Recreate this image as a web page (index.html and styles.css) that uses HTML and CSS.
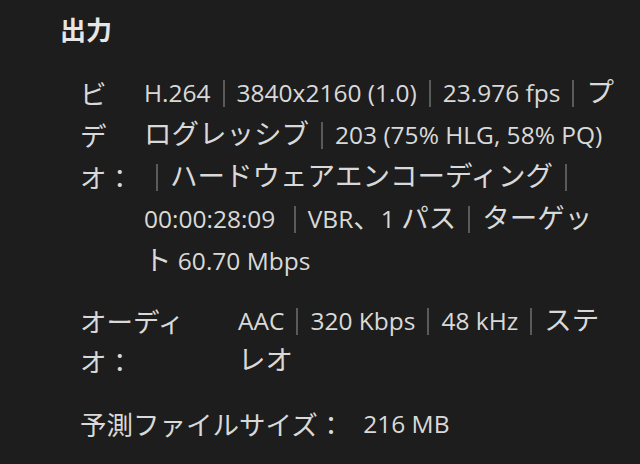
FILE: index.html
```html
<!DOCTYPE html>
<html lang="ja">
<head>
<meta charset="utf-8">
<link rel="stylesheet" href="styles.css">
</head>
<body>
<section class="panel">
  <h2 class="title">出力</h2>
  <div class="row video">
    <div class="label">ビデオ：</div>
    <div class="value">H.264<span class="sep"></span>3840x2160 (1.0)<span class="sep"></span>23.976 fps<span class="sep"></span><span class="ja">プログレッシブ</span><span class="sep"></span>203 (75% HLG, 58% PQ)<span class="sep"></span><span class="ja">ハードウェアエンコーディング</span><span class="sep"></span>00:00:28:09 <span class="sep"></span>VBR<span class="ja">、</span>1 <span class="ja">パス</span><span class="sep"></span><span class="ja">ターゲット</span> 60.70 Mbps</div>
  </div>
  <div class="row audio">
    <div class="label">オーディオ：</div>
    <div class="value">AAC<span class="sep"></span>320 Kbps<span class="sep"></span>48 kHz<span class="sep"></span><span class="ja">ステレオ</span></div>
  </div>
  <div class="row size">
    <div class="label">予測ファイルサイズ：</div>
    <div class="value">216 MB</div>
  </div>
</section>
</body>
</html>
```

FILE: styles.css
```css
html, body {
  margin: 0;
  padding: 0;
  background: #1d1d1d;
}
.panel {
  width: 640px;
  height: 464px;
  box-sizing: border-box;
  padding: 14px 25px 0 60px;
  color: #d9d9d9;
  font-family: "Open Sans", "Noto Sans CJK JP", sans-serif;
  font-size: 24.5px;
}
.title {
  margin: 0;
  font-family: "Noto Sans CJK JP", sans-serif;
  font-size: 26px;
  font-weight: 700;
  line-height: 30px;
  color: #e6e6e6;
}
.row {
  display: flex;
  align-items: flex-start;
  margin-left: 20px;
}
.label {
  flex: none;
  font-family: "Noto Sans CJK JP", sans-serif;
  font-size: 26.5px;
}
.value {
  flex: 1;
  min-width: 0;
}
.ja {
  font-family: "Noto Sans CJK JP", sans-serif;
  font-size: 27.5px;
  line-height: 28px;
}
.sep {
  display: inline-block;
  width: 2px;
  height: 27px;
  margin: 0 12px;
  background: #5a5a5a;
  vertical-align: -5px;
}
.video {
  margin-top: 28px;
  line-height: 42px;
}
.video .label {
  width: 40px;
  margin-right: 24px;
}
.audio {
  margin-top: 19px;
  line-height: 40px;
}
.audio .label {
  width: 120px;
  margin-right: 38px;
}
.size {
  margin-top: 23px;
  line-height: 40px;
}
.size .label {
  margin-right: 19px;
}
```
